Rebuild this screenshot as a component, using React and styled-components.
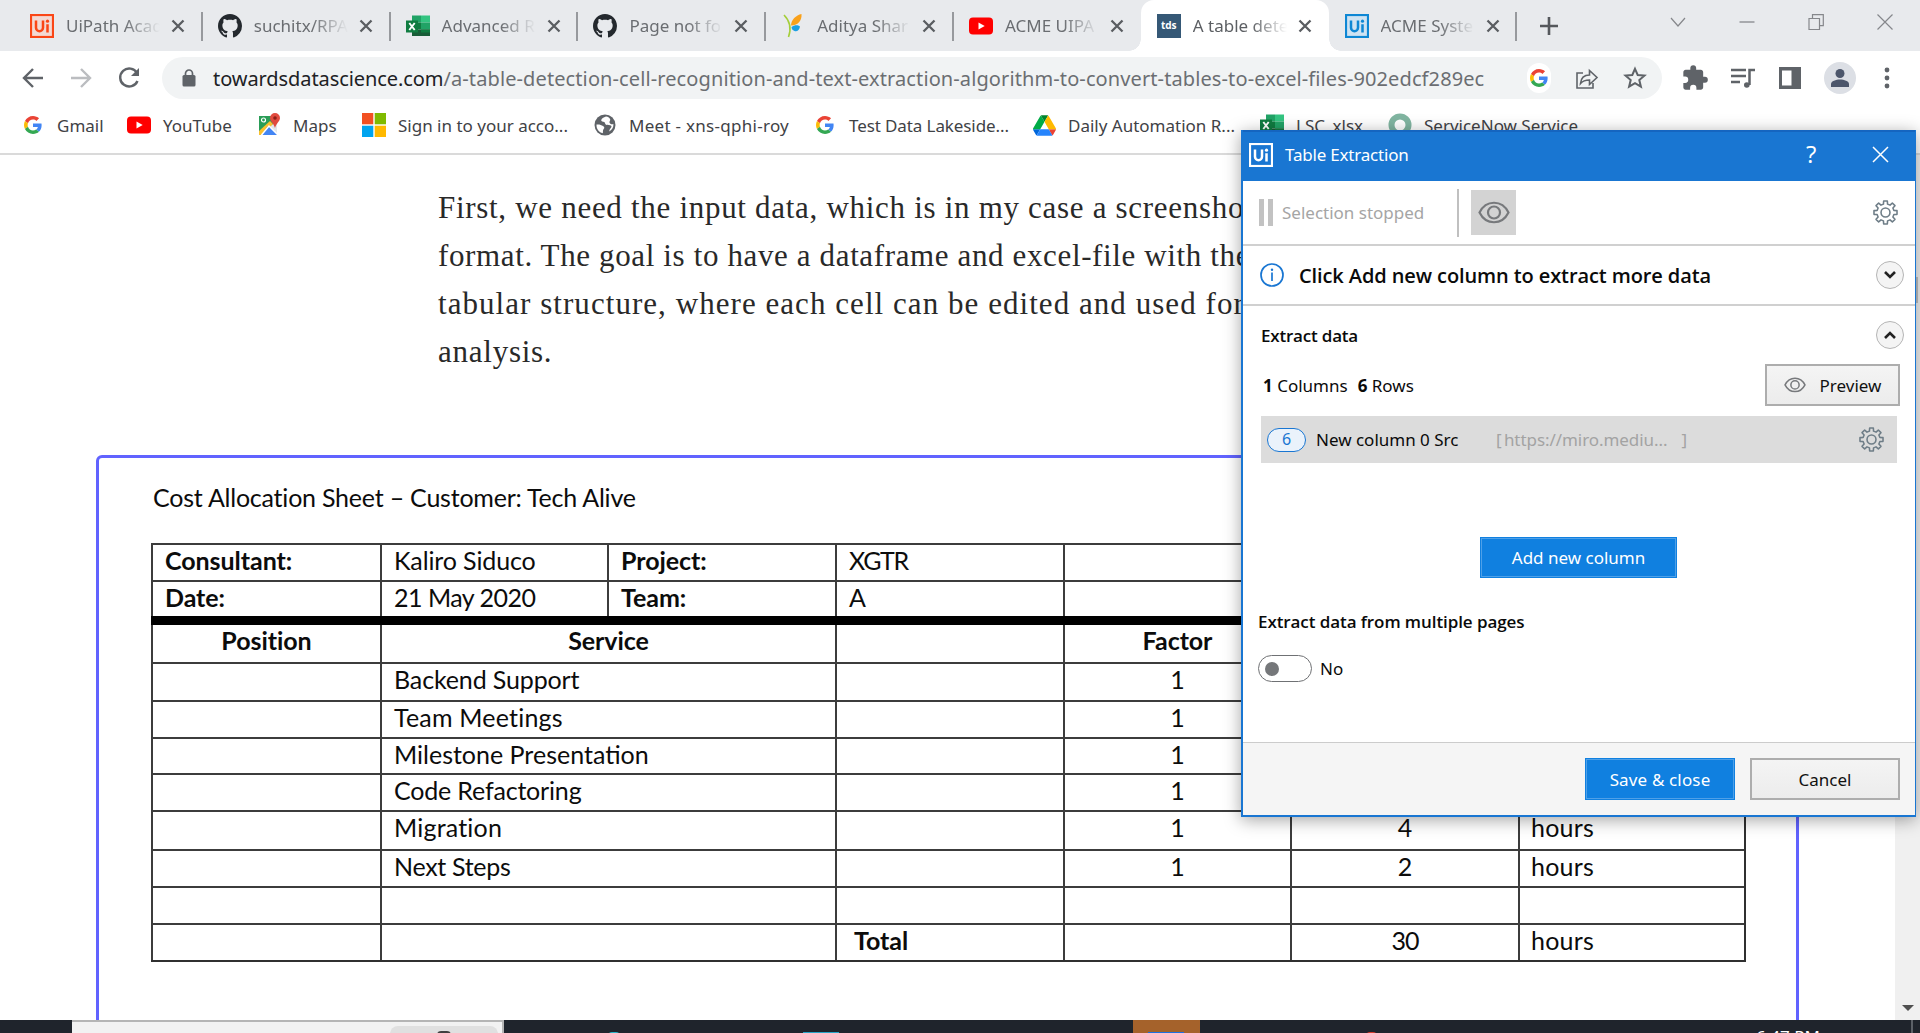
import React from "react";
import styled, { createGlobalStyle, css } from "styled-components";

const ui = `"Noto Sans", "Open Sans", sans-serif`;

const Global = createGlobalStyle`
  * { box-sizing: border-box; }
  body { margin: 0; background: #fff; overflow: hidden; }
  svg { display: block; flex: none; }
`;

const Screen = styled.div`
  position: relative;
  width: 1920px;
  height: 1033px;
  display: flex;
  flex-direction: column;
  overflow: hidden;
  font-family: ${ui};
  font-size: 17px;
  white-space: nowrap;
`;

/* ---------- tab strip ---------- */
const TabStrip = styled.header`
  height: 51px;
  flex: none;
  display: flex;
  background: #e8eaed;
  padding-left: 14px;
`;
const Tab = styled.div`
  position: relative;
  width: 187.8px;
  flex: none;
  height: 51px;
  display: flex;
  align-items: center;
  padding-left: 16px;
  color: #6a6d71;
  ${(p) => p.$line && css`
    &::after { content: ""; position: absolute; right: -1px; top: 12px; width: 2px; height: 29px; background: #97999d; }
  `}
  ${(p) => p.$active && css`
    background: #fff;
    border-radius: 13px 13px 0 0;
    color: #5c5f63;
    &::before, &::after { content: ""; position: absolute; bottom: 0; width: 12px; height: 12px; }
    &::before { left: -12px; background: radial-gradient(circle at 0 0, transparent 11.5px, #fff 12px); }
    &::after { right: -12px; background: radial-gradient(circle at 100% 0, transparent 11.5px, #fff 12px); }
  `}
`;
const TabTitle = styled.span`
  width: 94px;
  margin: 0 11px 0 12px;
  overflow: hidden;
  line-height: 26px;
  -webkit-mask-image: linear-gradient(90deg, #000 62%, transparent 100%);
  mask-image: linear-gradient(90deg, #000 62%, transparent 100%);
`;
const NewTab = styled.div`
  display: flex;
  align-items: center;
  padding-left: 23px;
  flex: 1;
`;
const WindowControls = styled.div`
  display: flex;
  gap: 53px;
  padding: 14px 27px 0 0;
`;

/* ---------- toolbar ---------- */
const Toolbar = styled.div`
  height: 54px;
  flex: none;
  display: flex;
  align-items: center;
  padding: 0 21px;
`;
const NavButtons = styled.div`
  display: flex;
  gap: 24px;
  width: 141px;
  flex: none;
`;
const AddressBar = styled.div`
  width: 1500px;
  flex: none;
  height: 42px;
  border-radius: 21px;
  background: #f1f3f4;
  display: flex;
  align-items: center;
  padding: 0 15px 0 20px;
`;
const Url = styled.div`
  margin-left: 17px;
  flex: 1;
  font-size: 20px;
  letter-spacing: 0.105px;
  color: #6b6e72;
  b { font-weight: 400; color: #202124; letter-spacing: -0.08px; }
`;
const BarIcons = styled.div`
  display: flex;
  gap: 24px;
  align-items: center;
`;
const GDisc = styled.span`
  width: 24px;
  height: 30px;
  border-radius: 12px;
  background: #fff;
  display: grid;
  place-items: center;
`;
const ExtensionIcons = styled.div`
  display: flex;
  align-items: center;
  gap: 19.5px;
  margin-left: 19px;
`;
const Avatar = styled.span`
  width: 32px;
  height: 32px;
  border-radius: 50%;
  background: #dcdfe5;
  display: grid;
  place-items: center;
`;

/* ---------- bookmarks ---------- */
const Bookmarks = styled.nav`
  height: 50px;
  flex: none;
  display: flex;
  align-items: center;
  padding: 0 0 8px 21px;
  border-bottom: 2px solid #dadada;
`;
const Bookmark = styled.div`
  display: flex;
  align-items: center;
  width: ${(p) => p.$w}px;
  color: #3f4246;
  flex: none;
`;
const BookmarkIcon = styled.span`
  width: 24px;
  display: grid;
  place-items: center;
  margin-right: 12px;
`;
const BookmarkText = styled.span`
  letter-spacing: ${(p) => p.$ls || 0}px;
`;

/* ---------- article ---------- */
const Page = styled.main`
  height: 865px;
  flex: none;
  display: flex;
  overflow: hidden;
`;
const Article = styled.article`
  width: 1895px;
  padding-top: 29px;
`;
const Paragraph = styled.p`
  margin: 0 0 79px 438px;
  font: 31px/48px "Liberation Serif", serif;
  color: #292929;
`;
const Line = styled.span`
  display: block;
  letter-spacing: ${(p) => p.$ls}px;
`;
const Figure = styled.section`
  margin-left: 96px;
  width: 1703px;
  height: 620px;
  border: 3px solid #6163ff;
  border-radius: 6px;
  padding: 23px 0 0 52px;
  font-family: Lato, sans-serif;
  font-size: 25px;
  color: #0c0c0c;
`;
const SheetTitle = styled.div`
  height: 62px;
  line-height: 32px;
  padding-left: 2px;
  letter-spacing: -0.22px;
`;
const Sheet = styled.div`
  width: 1595px;
  border-bottom: 2px solid #303030;
  border-right: 2px solid #303030;
`;
const SheetRow = styled.div`
  display: flex;
  height: ${(p) => p.$h}px;
  border-top: ${(p) => (p.$thick ? "9px solid #000" : "2px solid #3c3c3c")};
`;
const CellBox = styled.div`
  width: ${(p) => p.$w}px;
  flex: none;
  border-left: 2px solid #3c3c3c;
  padding-left: ${(p) => (p.$center ? 0 : p.$pad || 12)}px;
  text-align: ${(p) => (p.$center ? "center" : "left")};
  font-weight: ${(p) => (p.$bold ? 700 : 400)};
  letter-spacing: ${(p) => p.$ls}px;
  line-height: 31px;
`;
const Scrollbar = styled.aside`
  width: 25px;
  background: #f0f0f0;
  display: flex;
  flex-direction: column;
  align-items: center;
  justify-content: space-between;
  padding: 122px 0 8px;
`;
const Thumb = styled.div`
  width: 21px;
  height: 26px;
  background: #c1c1c1;
`;

/* ---------- extraction dialog ---------- */
const Dialog = styled.section`
  position: absolute;
  left: 1241px;
  top: 130px;
  width: 675px;
  height: 687px;
  display: flex;
  flex-direction: column;
  background: #fff;
  border: 2px solid #1976d2;
  border-top: 0;
  border-right-width: 1px;
  box-shadow: 0 3px 16px rgba(0, 0, 0, 0.36);
  color: #0a0a0a;
`;
const TitleBar = styled.div`
  height: 51px;
  flex: none;
  display: flex;
  align-items: center;
  background: #1976d2;
  border-top: 2px solid #1565c0;
  color: #fff;
  padding: 0 26px 4px 6px;
`;
const DialogTitle = styled.span`
  flex: 1;
  margin: -1px 0 0 12px;
  letter-spacing: -0.2px;
`;
const Help = styled.span`
  font: 24px/28px "Open Sans", sans-serif;
  width: 12px;
  margin: -2px 54px 0 0;
`;
const SelectionBar = styled.div`
  height: 65px;
  flex: none;
  display: flex;
  align-items: center;
  padding: 0 17px 0 16px;
  border-bottom: 2px solid #d0d0d0;
`;
const Pause = styled.span`
  width: 14px;
  height: 27px;
  border: solid #c2c2c2;
  border-width: 0 5px;
`;
const Stopped = styled.span`
  margin-left: 9px;
  width: 175px;
  color: #a5a5a5;
`;
const Divider = styled.span`
  width: 2px;
  height: 48px;
  background: #c0c0c0;
  margin-right: 12px;
`;
const EyeToggle = styled.span`
  width: 45px;
  height: 45px;
  background: #d3d3d3;
  display: grid;
  place-items: center;
  margin-right: auto;
`;
const HintBar = styled.div`
  height: 60px;
  flex: none;
  display: flex;
  align-items: center;
  padding: 0 11px 0 17px;
  border-bottom: 2px solid #d0d0d0;
`;
const Hint = styled.span`
  flex: 1;
  margin-left: 15px;
  font-size: 20px;
  font-weight: 600;
  font-family: "Open Sans", sans-serif;
  letter-spacing: -0.1px;
`;
const RoundButton = styled.span`
  width: 28px;
  height: 28px;
  border-radius: 50%;
  border: 1px solid #b5b5b5;
  background: #f4f4f4;
  display: grid;
  place-items: center;
`;
const Body = styled.div`
  flex: 1;
  display: flex;
  flex-direction: column;
  padding: 15px 11px 0 18px;
`;
const SectionHead = styled.div`
  display: flex;
  justify-content: space-between;
  align-items: center;
  height: 28px;
`;
const Strong = styled.span`
  font-family: "Open Sans", sans-serif;
  font-weight: 600;
  letter-spacing: ${(p) => p.$ls || 0}px;
`;
const CountRow = styled.div`
  display: flex;
  align-items: center;
  justify-content: space-between;
  margin-top: 15px;
  padding: 0 4px 0 2px;
  height: 42px;
  b { font-weight: 700; }
  i { font-style: normal; margin-left: 10px; }
`;
const Button = styled.button`
  width: ${(p) => p.$w}px;
  height: ${(p) => p.$h || 42}px;
  padding: 0;
  display: flex;
  align-items: center;
  justify-content: center;
  gap: 14px;
  font: 17px ${ui};
  letter-spacing: ${(p) => p.$ls || 0}px;
  color: #111;
  background: linear-gradient(#f4f4f4, #ececec);
  border: 2px solid #adadad;
  ${(p) => p.$primary && css`
    color: #fff;
    background: #1080e0;
    border: 1px solid #1080e0;
    box-shadow: inset 0 0 0 1px #4ea0e8;
  `}
`;
const ColumnRow = styled.div`
  height: 47px;
  width: 636px;
  margin-top: 10px;
  background: #dcdcdc;
  display: flex;
  align-items: center;
  padding: 0 13px 0 6px;
`;
const Pill = styled.span`
  width: 39px;
  height: 24px;
  border-radius: 12px;
  border: 1px solid #1976d2;
  background: #eaf2fb;
  color: #1976d2;
  font-size: 16px;
  line-height: 21px;
  text-align: center;
`;
const ColumnName = styled.span`
  margin-left: 10px;
  width: 180px;
`;
const ColumnSource = styled.span`
  color: #a3a3a3;
  width: 191px;
  display: flex;
  justify-content: space-between;
  margin-right: auto;
  word-spacing: -2px;
  letter-spacing: -0.06px;
`;
const AddWrap = styled.div`
  display: flex;
  margin: 74px 0 32px 219px;
`;
const Multi = styled.div`
  margin-left: -3px;
`;
const ToggleRow = styled.div`
  display: flex;
  align-items: center;
  gap: 8px;
  height: 27px;
  margin-top: 22px;
`;
const Toggle = styled.span`
  width: 54px;
  height: 27px;
  border: 1px solid #6f7174;
  border-radius: 14px;
  display: flex;
  align-items: center;
  padding-left: 6px;
  &::before { content: ""; width: 14px; height: 14px; border-radius: 50%; background: #75777a; }
`;
const DialogFooter = styled.footer`
  height: 73px;
  flex: none;
  background: #f5f5f5;
  border-top: 1px solid #cccccc;
  display: flex;
  justify-content: flex-end;
  padding: 15px 15px 0;
  gap: 15px;
`;

/* ---------- taskbar ---------- */
const Taskbar = styled.footer`
  height: 13px;
  flex: none;
  display: flex;
  background: #1f242c;
  overflow: hidden;
  padding-left: 72px;
`;
const SearchBox = styled.div`
  width: 432px;
  height: 40px;
  flex: none;
  background: #f2f2f2;
  border: 2px solid #b5b5b5;
  border-left: 0;
  display: flex;
  padding: 4px 4px 0 318px;
`;
const SearchChip = styled.div`
  width: 108px;
  height: 30px;
  border-radius: 8px;
  background: #e0e0e0;
  padding: 5px 0 0 47px;
  &::before { content: ""; display: block; width: 14px; height: 10px; border-radius: 4px; background: #404040; }
`;
const TaskIcon = styled.div`
  width: ${(p) => p.$w}px;
  height: 10px;
  margin: 12px 0 0 ${(p) => p.$gap}px;
  background: ${(p) => p.$c};
  border-radius: ${(p) => (p.$round ? "5px 5px 0 0" : 0)};
  flex: none;
`;
const TaskActive = styled.div`
  width: 67px;
  height: 13px;
  margin-left: 294px;
  background: #a5622b;
  display: flex;
  flex: none;
`;
const Clock = styled.div`
  margin: 5px 91px 0 378px;
  color: #fff;
  font-size: 17px;
  line-height: 24px;
  flex: none;
`;
const DesktopEdge = styled.div`
  width: 2px;
  background: #5b6067;
  flex: none;
`;

/* ---------- icons ---------- */
const UiIcon = ({ c, fill = "none", size = 24 }) => (
  <svg width={size} height={size} viewBox="0 0 24 24">
    <rect x="1" y="1" width="22" height="22" fill={fill} stroke={c} strokeWidth="2.2" />
    <path d="M6 6.500v7.200a3.500 3.500 0 0 0 7 0V6.500M17.500 10.200V18.500" fill="none" stroke={c} strokeWidth="2.500" />
    <circle cx="17.500" cy="7.200" r="1.600" fill={c} />
  </svg>
);
const GithubIcon = () => (
  <svg width="24" height="24" viewBox="0 0 16 16" fill="#24292e">
    <path d="M8 0C3.580 0 0 3.580 0 8c0 3.540 2.290 6.530 5.470 7.590.4.070.550-.170.550-.380 0-.190-.010-.820-.010-1.490-2.010.370-2.530-.490-2.690-.940-.090-.230-.480-.940-.820-1.130-.280-.150-.680-.520-.010-.530.630-.010 1.080.580 1.230.820.720 1.210 1.870.870 2.330.660.070-.520.280-.870.510-1.070-1.780-.200-3.640-.890-3.640-3.950 0-.870.310-1.590.820-2.150-.080-.200-.360-1.020.080-2.120 0 0 .670-.210 2.200.820.640-.180 1.320-.270 2-.270s1.360.090 2 .270c1.530-1.040 2.200-.820 2.200-.820.440 1.100.160 1.920.080 2.120.510.560.820 1.270.820 2.150 0 3.070-1.870 3.750-3.650 3.950.290.250.540.730.540 1.480 0 1.070-.010 1.930-.010 2.200 0 .210.150.460.550.380A8.010 8.010 0 0 0 16 8c0-4.420-3.580-8-8-8z" />
  </svg>
);
const ExcelIcon = () => (
  <svg width="24" height="24" viewBox="0 0 24 24">
    <path d="M6 1.500h9v7H6z" fill="#21a366" /><path d="M15 1.500h9v7h-9z" fill="#33c481" />
    <path d="M6 8.500h9v7H6z" fill="#107c41" /><path d="M15 8.500h9v7h-9z" fill="#21a366" />
    <path d="M6 15.500h18v6.500H6z" fill="#185c37" /><path d="M15 15.500h9v3h-9z" fill="#107c41" />
    <path d="M0 6.500h12v12H0z" fill="#107c41" />
    <path d="M3.300 9l5.400 7M8.700 9l-5.400 7" stroke="#fff" strokeWidth="1.900" />
  </svg>
);
const YoutubeIcon = () => (
  <svg width="24" height="24" viewBox="0 0 24 24">
    <rect y="3.500" width="24" height="17" rx="4" fill="#f00" /><path d="M9.500 8.500v7l6.200-3.500z" fill="#fff" />
  </svg>
);
const ButterflyIcon = () => (
  <svg width="24" height="24" viewBox="0 0 24 24">
    <path d="M3 1c5 5 8 12 4.500 22" fill="none" stroke="#a4ce39" strokeWidth="1.600" />
    <path d="M10 11.500C10 6 15 1 20.500 0c.5 6-3 11.500-10.500 11.500z" fill="#f9a11b" />
    <path d="M10.500 13c3.500-2.500 6.500-2 8.500-.5-.5 3.500-3 5.500-5.500 4.500-2-.8-3-2-3-4z" fill="#1ca0e3" />
  </svg>
);
const TdsBadge = styled.span`
  width: 24px;
  height: 24px;
  background: #355876;
  color: #fff;
  font: 700 10px/23px "Open Sans", sans-serif;
  text-align: center;
  flex: none;
`;
const GoogleIcon = ({ size = 18 }) => (
  <svg width={size} height={size} viewBox="0 0 48 48">
    <path fill="#ea4335" d="M24 9.500c3.540 0 6.710 1.220 9.210 3.600l6.850-6.850C35.900 2.380 30.470 0 24 0 14.620 0 6.510 5.380 2.560 13.220l7.980 6.190C12.430 13.720 17.740 9.500 24 9.500z" />
    <path fill="#4285f4" d="M46.980 24.550c0-1.570-.150-3.090-.380-4.550H24v9.020h12.940c-.580 2.960-2.260 5.480-4.780 7.180l7.730 6c4.510-4.180 7.090-10.360 7.090-17.650z" />
    <path fill="#fbbc05" d="M10.530 28.590c-.480-1.450-.760-2.990-.760-4.590s.270-3.140.760-4.590l-7.980-6.190C.920 16.460 0 20.120 0 24s.920 7.540 2.560 10.780l7.970-6.190z" />
    <path fill="#34a853" d="M24 48c6.480 0 11.930-2.130 15.890-5.810l-7.730-6c-2.150 1.450-4.920 2.300-8.160 2.300-6.260 0-11.570-4.220-13.470-9.910l-7.980 6.190C6.510 42.620 14.620 48 24 48z" />
  </svg>
);
const MapsIcon = () => (
  <svg width="24" height="24" viewBox="0 0 24 24">
    <path d="M2 3h18v19H2z" fill="#e3e6ea" />
    <path d="M2 3h14v8L3 21H2z" fill="#2a9d57" />
    <path d="M2 18L13 8l3 3L4 22H2z" fill="#fbc02d" /><path d="M10 14l2-1 9 9H5z" fill="#4285f4" />
    <path d="M4.500 22L12 13l9 9" fill="none" stroke="#fff" strokeWidth="1.500" />
    <circle cx="6.500" cy="7" r="2" fill="none" stroke="#fff" strokeWidth="1.200" />
    <path d="M18 0a5 5 0 0 1 5 5c0 3-3.500 5-5 10-1.500-5-5-7-5-10a5 5 0 0 1 5-5z" fill="#e14b3f" /><circle cx="18" cy="5" r="1.800" fill="#8c2018" />
  </svg>
);
const MicrosoftIcon = () => (
  <svg width="24" height="24" viewBox="0 0 24 24">
    <path fill="#f25022" d="M0 0h11.300v11.300H0z" /><path fill="#7fba00" d="M12.700 0H24v11.300H12.700z" />
    <path fill="#00a4ef" d="M0 12.700h11.300V24H0z" /><path fill="#ffb900" d="M12.700 12.700H24V24H12.700z" />
  </svg>
);
const GlobeIcon = () => (
  <svg width="22" height="22" viewBox="0 0 22 22">
    <circle cx="11" cy="11" r="10.500" fill="#5f6368" />
    <path d="M2.500 10.500c2.500-.3 5 .3 6.500 1.500 1.500 1 1.800 2 .5 3.200-.8.800-.4 2.300-.7 4C5 18.500 2.300 15 2.500 10.500z" fill="#fff" />
    <path d="M12 2.600c-2.500 1-4.500 2-4.800 3.700 0 1.500 1.800 1.500 3 1.700 1 .3.600 2 1.800 2.700 1.500.7 4-.2 5.200 1 .8 1-.2 2-1 3-.6.8-.8 1.500-1 2.800 3-1.600 4.500-4.500 4.200-7.500-1.500.5-3 .2-3.700-1-.8-1.300.5-2.300.6-3.300C16 4 14 2.800 12 2.600z" fill="#fff" />
  </svg>
);
const DriveIcon = () => (
  <svg width="23" height="21" viewBox="0 0 87.300 78">
    <path d="M6.600 66.850l3.850 6.650c.8 1.400 1.950 2.500 3.300 3.300l13.750-23.800H0c0 1.550.4 3.100 1.200 4.500z" fill="#0066da" />
    <path d="M43.650 25L29.900 1.200c-1.350.8-2.500 1.900-3.300 3.300L1.200 48.500C.4 49.900 0 51.450 0 53h27.500z" fill="#00ac47" />
    <path d="M73.550 76.800c1.350-.8 2.500-1.900 3.300-3.300L86.100 57.500c.8-1.400 1.200-2.950 1.200-4.500H59.800l5.850 11.500z" fill="#ea4335" />
    <path d="M43.650 25L57.400 1.200C56.050.4 54.500 0 52.900 0H34.400c-1.600 0-3.150.450-4.500 1.200z" fill="#00832d" />
    <path d="M59.800 53H27.500L13.750 76.800c1.350.8 2.900 1.200 4.500 1.200h50.800c1.600 0 3.150-.450 4.500-1.200z" fill="#2684fc" />
    <path d="M73.400 26.500L60.700 4.500c-.8-1.400-1.950-2.500-3.300-3.300L43.650 25 59.800 53h27.450c0-1.550-.4-3.100-1.200-4.500z" fill="#ffba00" />
  </svg>
);
const RingIcon = () => (
  <svg width="24" height="24" viewBox="0 0 24 24"><circle cx="12" cy="12" r="8.500" fill="none" stroke="#81b5a1" strokeWidth="6" /></svg>
);
const Stroke = ({ w = 24, h = w, vb = `0 0 ${w} ${h}`, d, c = "#5f6368", sw = 2 }) => (
  <svg width={w} height={h} viewBox={vb} fill="none" stroke={c} strokeWidth={sw}><path d={d} /></svg>
);
const CloseIcon = () => <Stroke w={14} d="M1.500 1.500l11 11M12.500 1.500l-11 11" c="#5a5d61" sw={2.3} />;
const EyeIcon = ({ w = 32 }) => (
  <svg width={w} height={w * 0.72} viewBox="0 0 32 23" fill="none" stroke="#77797c" strokeWidth="2.200">
    <path d="M1.500 11.500C8-1.500 24-1.500 30.500 11.500 24 24.500 8 24.500 1.500 11.500z" /><circle cx="16" cy="11.500" r="6" />
  </svg>
);
const gearPath = (() => {
  const pts = [];
  for (let i = 0; i < 8; i++) {
    [[-0.3, 8.3], [-0.2, 11.2], [0.2, 11.2], [0.3, 8.3]].forEach(([o, r]) => {
      const a = (i * Math.PI) / 4 + o * 0.8;
      pts.push(`${(12 + r * Math.sin(a)).toFixed(2)} ${(12 - r * Math.cos(a)).toFixed(2)}`);
    });
  }
  return `M${pts.join("L")}Z`;
})();
const GearIcon = () => (
  <svg width="25" height="25" viewBox="0 0 24 24" fill="none" stroke="#6e7d87" strokeWidth="1.500" strokeLinejoin="round">
    <path d={gearPath} /><circle cx="12" cy="12" r="4.300" />
  </svg>
);
const InfoIcon = () => (
  <svg width="24" height="24" viewBox="0 0 24 24">
    <circle cx="12" cy="12" r="11" fill="none" stroke="#1976d2" strokeWidth="1.700" />
    <path d="M12 9.500V18" stroke="#1976d2" strokeWidth="1.700" /><circle cx="12" cy="6.800" r="1.200" fill="#1976d2" />
  </svg>
);

/* ---------- data ---------- */
const tabs = [
  { icon: <UiIcon c="#fa4616" fill="#f3d9d3" />, title: "UiPath Acad", line: true },
  { icon: <GithubIcon />, title: "suchitx/RPA", line: true },
  { icon: <ExcelIcon />, title: "Advanced R", line: true },
  { icon: <GithubIcon />, title: "Page not fo", line: true },
  { icon: <ButterflyIcon />, title: "Aditya Shar", line: true },
  { icon: <YoutubeIcon />, title: "ACME UIPA" },
  { icon: <TdsBadge>tds</TdsBadge>, title: "A table dete", active: true },
  { icon: <UiIcon c="#0e87d4" fill="#cfe3f2" />, title: "ACME Syste", line: true },
];
const bookmarks = [
  { w: 106, icon: <GoogleIcon />, text: "Gmail" },
  { w: 130, icon: <YoutubeIcon />, text: "YouTube" },
  { w: 105, icon: <MapsIcon />, text: "Maps" },
  { w: 231, icon: <MicrosoftIcon />, text: "Sign in to your acco..." },
  { w: 220, icon: <GlobeIcon />, text: "Meet - xns-qphi-roy", ls: 0.28 },
  { w: 219, icon: <GoogleIcon />, text: "Test Data Lakeside...", ls: -0.1 },
  { w: 228, icon: <DriveIcon />, text: "Daily Automation R..." },
  { w: 128, icon: <ExcelIcon />, text: "LSC_xlsx" },
  { w: 200, icon: <RingIcon />, text: "ServiceNow Service" },
];
const headColumns = [229, 227, 228, 228, 227, 228, 226];
const columns = [229, 455, 228, 227, 228, 226];
const services = [
  [38, "Backend Support", "1", "8"],
  [37, "Team Meetings", "1", "5"],
  [36, "Milestone Presentation", "1", "4"],
  [37, "Code Refactoring", "1", "7"],
  [39, "Migration", "1", "4"],
  [37, "Next Steps", "1", "2"],
];
const tracking = {
  "Kaliro Siduco": -0.13,
  "21 May 2020": -0.5,
  XGTR: -1.3,
  "Backend Support": -0.13,
  "Milestone Presentation": 0,
  "Code Refactoring": -0.18,
  "Next Steps": -0.3,
  30: -1,
};

function Cell({ text = "", w, bold, center, pad }) {
  const ls = tracking[text] ?? (bold ? -0.05 : 0.2);
  return <CellBox $w={w} $bold={bold} $center={center} $pad={text === "hours" ? 11 : pad} $ls={ls}>{text}</CellBox>;
}

function CostSheet() {
  const top = [
    [37, "Consultant:", "Kaliro Siduco", "Project:", "XGTR"],
    [36, "Date:", "21 May 2020", "Team:", "A"],
  ];
  return (
    <Sheet>
      {top.map(([h, ...c]) => (
        <SheetRow key={c[0]} $h={h}>
          {headColumns.map((w, i) => <Cell key={i} w={w} bold={i % 2 === 0} text={c[i]} />)}
        </SheetRow>
      ))}
      <SheetRow $h={46} $thick>
        {["Position", "Service", "", "Factor", "", ""].map((t, i) => <Cell key={i} w={columns[i]} center bold text={t} />)}
      </SheetRow>
      {services.map(([h, name, f, n]) => (
        <SheetRow key={name} $h={h}>
          {["", name, "", f, n, "hours"].map((t, i) => <Cell key={i} w={columns[i]} center={i === 3 || i === 4} text={t} />)}
        </SheetRow>
      ))}
      <SheetRow $h={37}>{columns.map((w, i) => <Cell key={i} w={w} />)}</SheetRow>
      <SheetRow $h={37}>
        {["", "", "Total", "", "30", "hours"].map((t, i) => (
          <Cell key={i} w={columns[i]} bold={i === 2} pad={i === 2 ? 17 : 12} center={i === 4} text={t} />
        ))}
      </SheetRow>
    </Sheet>
  );
}

function ExtractionDialog() {
  return (
    <Dialog>
      <TitleBar>
        <UiIcon c="#fff" />
        <DialogTitle>Table Extraction</DialogTitle>
        <Help>?</Help>
        <Stroke w={17} d="M1 1l15 15M16 1L1 16" c="#fff" sw={1.5} />
      </TitleBar>
      <SelectionBar>
        <Pause />
        <Stopped>Selection stopped</Stopped>
        <Divider />
        <EyeToggle><EyeIcon /></EyeToggle>
        <GearIcon />
      </SelectionBar>
      <HintBar>
        <InfoIcon />
        <Hint>Click Add new column to extract more data</Hint>
        <RoundButton><Stroke w={12} h={8} d="M1 1l5 5 5-5" c="#222" sw={2.6} /></RoundButton>
      </HintBar>
      <Body>
        <SectionHead>
          <Strong $ls={-0.2}>Extract data</Strong>
          <RoundButton><Stroke w={12} h={8} d="M1 7l5-5 5 5" c="#222" sw={2.6} /></RoundButton>
        </SectionHead>
        <CountRow>
          <span><b>1</b> Columns<i><b>6</b> Rows</i></span>
          <Button $w={135}><EyeIcon w={22} />Preview</Button>
        </CountRow>
        <ColumnRow>
          <Pill>6</Pill>
          <ColumnName>New column 0 Src</ColumnName>
          <ColumnSource><span>[ https://miro.mediu...</span><span>]</span></ColumnSource>
          <GearIcon />
        </ColumnRow>
        <AddWrap><Button $primary $w={197} $h={41}>Add new column</Button></AddWrap>
        <Multi>
          <Strong $ls={-0.08}>Extract data from multiple pages</Strong>
          <ToggleRow><Toggle />No</ToggleRow>
        </Multi>
      </Body>
      <DialogFooter>
        <Button $primary $w={150} $ls={0.15}>Save &amp; close</Button>
        <Button $w={150}>Cancel</Button>
      </DialogFooter>
    </Dialog>
  );
}

export default function App() {
  return (
    <Screen>
      <Global />
      <TabStrip>
        {tabs.map((t, i) => (
          <Tab key={i} $active={t.active} $line={t.line}>
            {t.icon}
            <TabTitle>{t.title}</TabTitle>
            <CloseIcon />
          </Tab>
        ))}
        <NewTab><Stroke w={20} d="M10 1v18M1 10h18" c="#55585c" sw={2.6} /></NewTab>
        <WindowControls>
          <Stroke w={16} d="M1 4l7 8 7-8" c="#85878b" sw={1.2} />
          <Stroke w={16} d="M0.500 8h15" c="#85878b" sw={1.3} />
          <Stroke w={16} d="M1 4.500h10.500v11H1zM4.500 4.500V.7h10.800v11h-3.800" c="#85878b" sw={1.2} />
          <Stroke w={16} d="M.5.500l15 15M15.500.500l-15 15" c="#85878b" sw={1.2} />
        </WindowControls>
      </TabStrip>
      <Toolbar>
        <NavButtons>
          <Stroke w={24} d="M22 12H3.500M12 3l-9 9 9 9" sw={2.4} />
          <Stroke w={24} d="M2 12h18.500M12 3l9 9-9 9" c="#bbbdc0" sw={2.4} />
          <svg width="24" height="24" viewBox="0 0 24 24" fill="none" stroke="#5f6368" strokeWidth="2.400">
            <path d="M20.500 15a9 9 0 1 1-.5-8" /><path d="M22 2v8h-8z" fill="#5f6368" stroke="none" />
          </svg>
        </NavButtons>
        <AddressBar>
          <svg width="14" height="18" viewBox="0 0 14 18"><rect x=".5" y="6" width="13" height="11.500" rx="1.500" fill="#5f6368" /><path d="M3.500 7V4.500a3.500 3.500 0 0 1 7 0V7" fill="none" stroke="#5f6368" strokeWidth="1.700" /></svg>
          <Url><b>towardsdatascience.com</b>/a-table-detection-cell-recognition-and-text-extraction-algorithm-to-convert-tables-to-excel-files-902edcf289ec</Url>
          <BarIcons>
            <GDisc><GoogleIcon /></GDisc>
            <Stroke w={24} d="M8 7H2v15h16v-5M5.500 17.500c.5-6 4-8.500 9-8.500V4.500l7.500 7-7.500 7V14c-4 0-6.500.5-9 3.500z" sw={1.6} />
            <Stroke w={24} d="M12 2.800l2.700 6.200 6.800.6-5.200 4.500 1.600 6.600-5.900-3.500-5.900 3.500 1.600-6.600L2.500 9.600 9.300 9z" sw={2} />
          </BarIcons>
        </AddressBar>
        <ExtensionIcons>
          <svg width="28" height="28" viewBox="0 0 24 24" fill="#5f6368"><path d="M20.500 11H19V7c0-1.100-.9-2-2-2h-4V3.500a2.500 2.500 0 0 0-5 0V5H4c-1.100 0-2 .9-2 2v3.800h1.500a2.700 2.700 0 0 1 0 5.400H2V20c0 1.100.9 2 2 2h3.800v-1.500a2.700 2.700 0 0 1 5.400 0V22H17c1.100 0 2-.9 2-2v-4h1.500a2.500 2.500 0 0 0 0-5z" /></svg>
          <svg width="28" height="26" viewBox="0 0 28 26" fill="none" stroke="#5f6368" strokeWidth="2.500"><path d="M2 5h15M2 11h15M2 17h9M20.500 20V5H26" /><circle cx="17.800" cy="20" r="2.800" fill="#5f6368" stroke="none" /></svg>
          <svg width="28" height="24" viewBox="0 0 28 24"><path d="M3 1h22v22H3z" fill="#5f6368" /><path d="M6 4.500h9.500v15H6z" fill="#fff" /></svg>
          <Avatar><svg width="20" height="20" viewBox="0 0 20 20" fill="#4c566b"><circle cx="10" cy="5.500" r="4.500" /><path d="M1 19v-3c0-3 5-4.500 9-4.500s9 1.500 9 4.500v3z" /></svg></Avatar>
          <svg width="24" height="24" viewBox="0 0 24 24" fill="#5f6368"><circle cx="12" cy="4" r="2.400" /><circle cx="12" cy="12" r="2.400" /><circle cx="12" cy="20" r="2.400" /></svg>
        </ExtensionIcons>
      </Toolbar>
      <Bookmarks>
        {bookmarks.map((b) => (
          <Bookmark key={b.text} $w={b.w}>
            <BookmarkIcon>{b.icon}</BookmarkIcon>
            <BookmarkText $ls={b.ls}>{b.text}</BookmarkText>
          </Bookmark>
        ))}
      </Bookmarks>
      <Page>
        <Article>
          <Paragraph>
            <Line $ls={0.7}>First, we need the input data, which is in my case a screenshot</Line>
            <Line $ls={0.63}>format. The goal is to have a dataframe and excel-file with the</Line>
            <Line $ls={1.05}>tabular structure, where each cell can be edited and used for</Line>
            <Line $ls={0.75}>analysis.</Line>
          </Paragraph>
          <Figure>
            <SheetTitle>Cost Allocation Sheet – Customer: Tech Alive</SheetTitle>
            <CostSheet />
          </Figure>
        </Article>
        <Scrollbar>
          <Thumb />
          <svg width="12" height="8" viewBox="0 0 12 8"><path d="M0 1h12L6 7z" fill="#505050" /></svg>
        </Scrollbar>
      </Page>
      <Taskbar>
        <SearchBox><SearchChip /></SearchBox>
        <TaskIcon $gap={103} $w={14} $c="#27b4c8" $round />
        <TaskIcon $gap={182} $w={36} $c="#27a5c8" />
        <TaskActive><TaskIcon $gap={15} $w={36} $c="#1c6fe0" /></TaskActive>
        <TaskIcon $gap={165} $w={13} $c="#d83b2b" $round />
        <Clock>6:47 PM</Clock>
        <DesktopEdge />
      </Taskbar>
      <ExtractionDialog />
    </Screen>
  );
}
